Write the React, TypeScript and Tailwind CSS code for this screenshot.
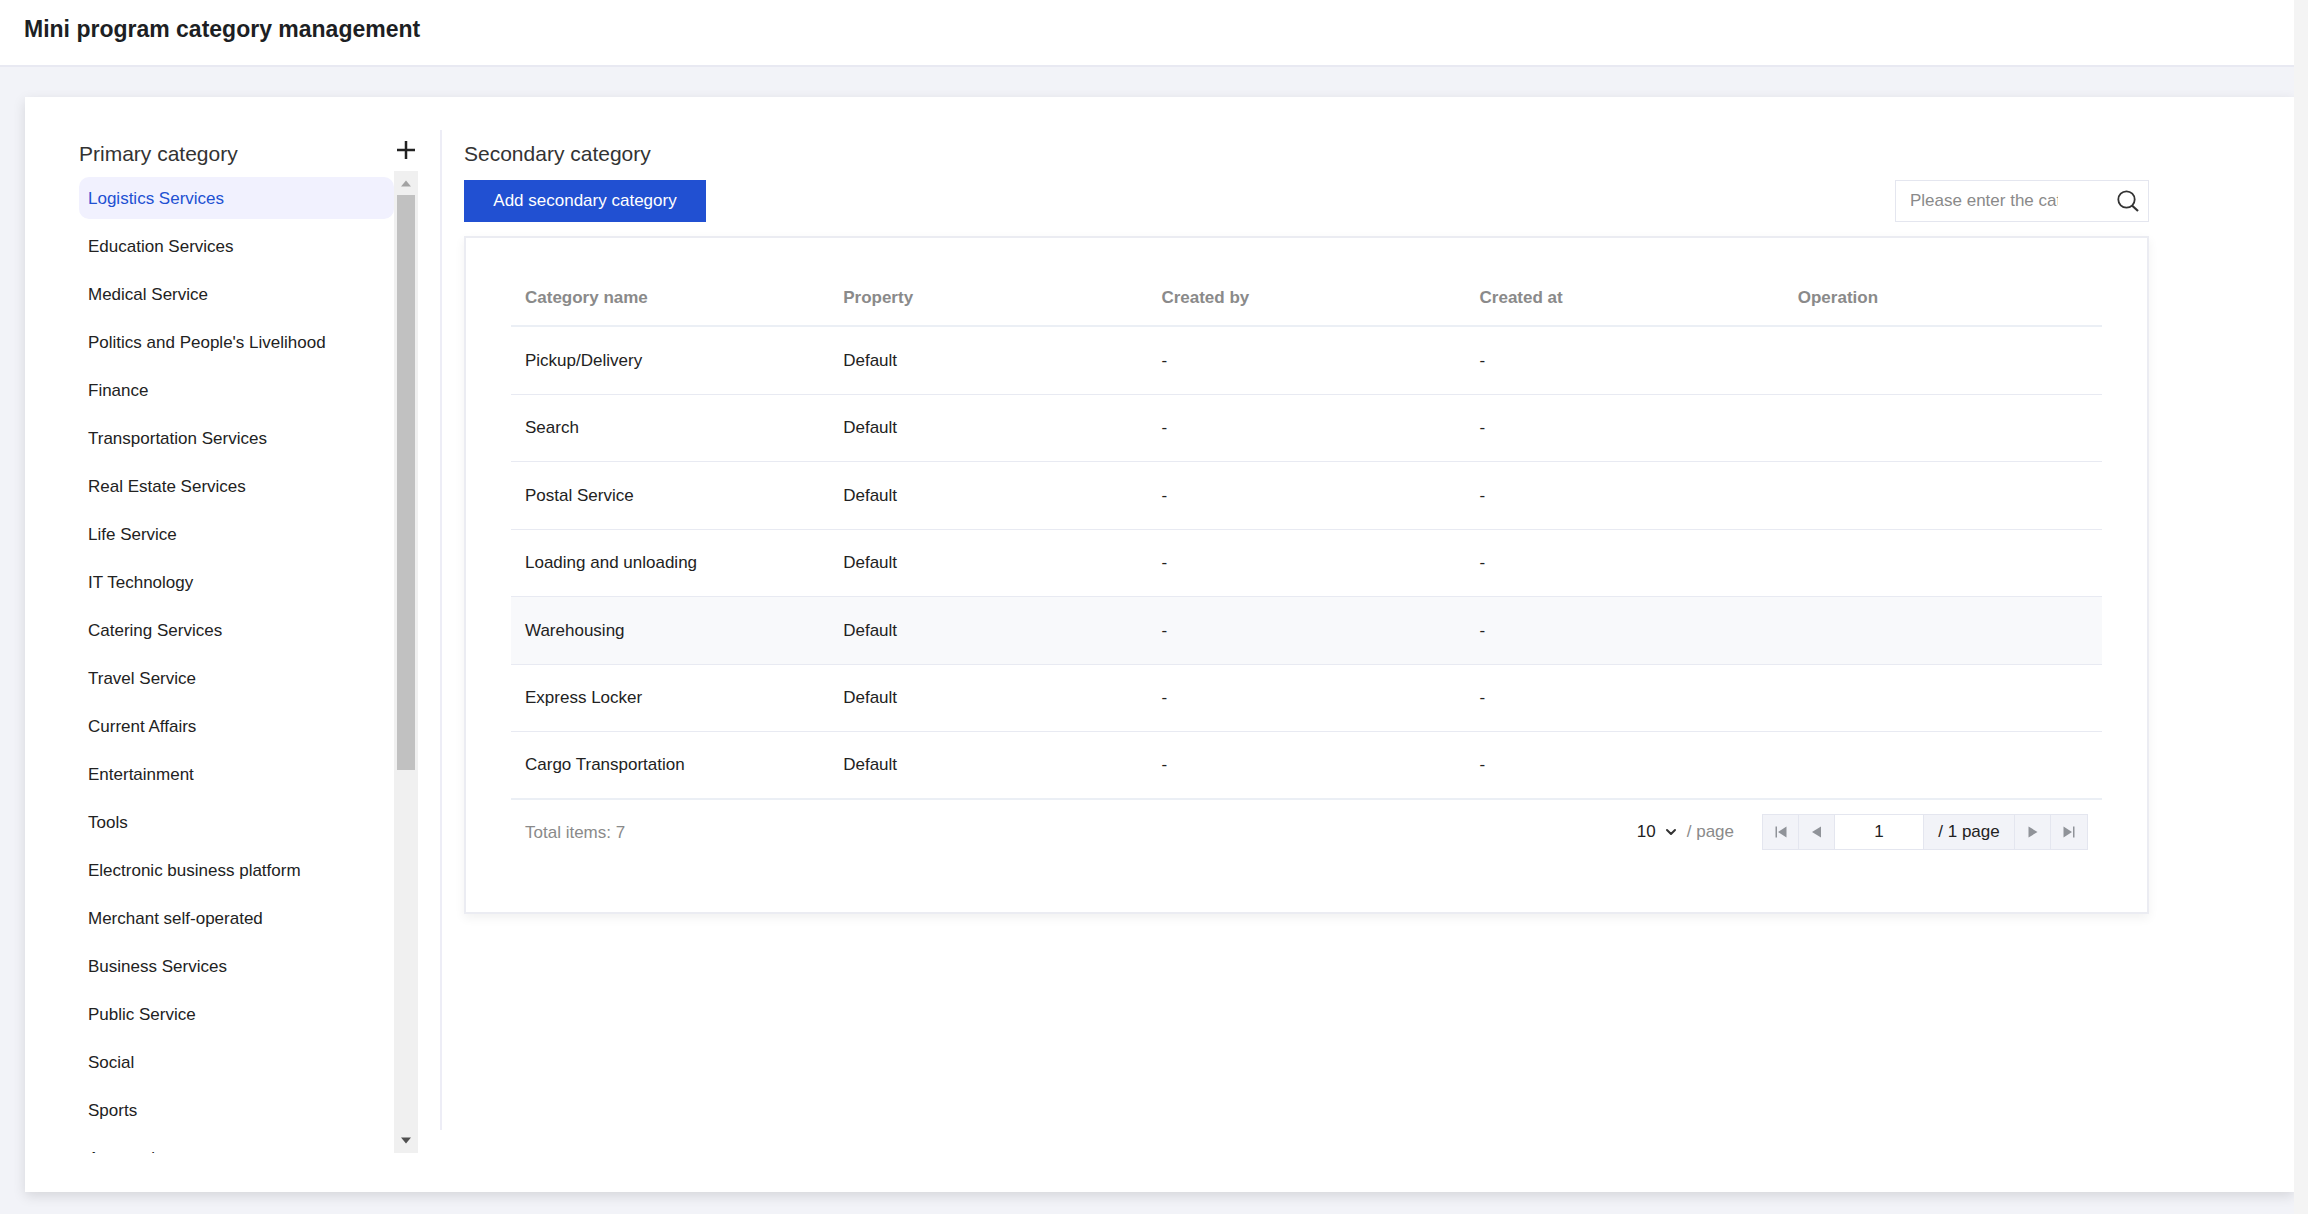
import { ChevronDown } from "lucide-react";

const categories = [
  "Logistics Services",
  "Education Services",
  "Medical Service",
  "Politics and People's Livelihood",
  "Finance",
  "Transportation Services",
  "Real Estate Services",
  "Life Service",
  "IT Technology",
  "Catering Services",
  "Travel Service",
  "Current Affairs",
  "Entertainment",
  "Tools",
  "Electronic business platform",
  "Merchant self-operated",
  "Business Services",
  "Public Service",
  "Social",
  "Sports",
  "Automotive",
];

const columns = ["Category name", "Property", "Created by", "Created at", "Operation"];

const rows = [
  "Pickup/Delivery",
  "Search",
  "Postal Service",
  "Loading and unloading",
  "Warehousing",
  "Express Locker",
  "Cargo Transportation",
];

function Header() {
  return (
    <header className="flex h-[67px] shrink-0 items-center border-b-2 border-[#e8e9f2] bg-white px-6 pb-2">
      <h1 className="text-[23px] leading-7 font-bold text-[#1d1f24]">
        Mini program category management
      </h1>
    </header>
  );
}

function ScrollBar() {
  return (
    <div className="flex w-6 shrink-0 flex-col items-center bg-[#f0f0f0]">
      <svg className="h-6 w-6 shrink-0" viewBox="0 0 24 24" fill="#a3a3a3">
        <path d="M7 15.5h10L12 9.5z" />
      </svg>
      <div className="flex w-full flex-1 flex-col px-[3px]">
        <div className="h-8/13 bg-[#c1c1c1]" />
      </div>
      <svg className="h-6 w-6 shrink-0" viewBox="0 0 24 24" fill="#505050">
        <path d="M7 8.5h10L12 14.5z" />
      </svg>
    </div>
  );
}

function PrimaryPanel() {
  return (
    <aside className="flex w-[339px] shrink-0 flex-col">
      <div className="flex h-[41px] items-start justify-between pt-2.5 pr-[3px]">
        <h2 className="text-[21px] leading-7 text-[#333]">Primary category</h2>
        <button type="button" aria-label="Add primary category" className="pt-px">
          <svg className="h-[18px] w-[18px]" viewBox="0 0 18 18" fill="none" stroke="#222" strokeWidth="2.5">
            <path d="M9 0v18M0 9h18" />
          </svg>
        </button>
      </div>
      <div className="flex min-h-0 flex-1">
        <ul className="flex min-w-0 flex-1 flex-col gap-1.5 overflow-hidden pt-1.5">
          {categories.map((name, i) => (
            <li key={name} className="shrink-0">
              <button
                type="button"
                className={
                  i === 0
                    ? "block h-[42px] w-full rounded-[10px] bg-[#f1f1fe] px-[9px] pt-px text-left text-[#2150d2]"
                    : "block h-[42px] w-full rounded-[10px] px-[9px] pt-px text-left"
                }
              >
                {name}
              </button>
            </li>
          ))}
        </ul>
        <ScrollBar />
      </div>
    </aside>
  );
}

function Toolbar() {
  return (
    <div className="flex items-center justify-between">
      <button type="button" className="h-[42px] w-[242px] bg-[#2150d2] text-white">
        Add secondary category
      </button>
      <label className="flex h-[42px] w-[254px] items-center justify-between border border-[#e4e6ef] bg-white pr-[9px] pl-3.5">
        <input
          type="text"
          aria-label="Search category"
          placeholder="Please enter the category name"
          className="w-[148px] outline-none placeholder:text-[#8a8a8a]"
        />
        <svg className="h-[22px] w-[22px]" viewBox="0 0 22 22" fill="none" stroke="#333" strokeWidth="1.8">
          <circle cx="9.5" cy="9.5" r="8.2" />
          <path d="M15 15.5l6 5.5" strokeWidth="2.2" />
        </svg>
      </label>
    </div>
  );
}

function CategoryTable() {
  return (
    <table className="w-full table-fixed border-collapse">
      <thead>
        <tr className="h-14 border-b-2 border-[#ebeff5]">
          {columns.map((name) => (
            <th key={name} className="px-3.5 pt-px text-left font-bold text-[#8a8a8a]">
              {name}
            </th>
          ))}
        </tr>
      </thead>
      <tbody>
        {rows.map((name) => (
          <tr
            key={name}
            className={
              name === "Warehousing"
                ? "h-[68px] border-b border-[#e8eaf2] bg-[#f8f9fb]"
                : "h-[68px] border-b border-[#e8eaf2] even:h-[67px] last:border-b-2 last:border-[#ebeff5]"
            }
          >
            <td className="px-3.5 pt-px">{name}</td>
            <td className="px-3.5 pt-px">Default</td>
            <td className="px-3.5 pt-px">-</td>
            <td className="px-3.5 pt-px">-</td>
            <td className="px-3.5 pt-px" />
          </tr>
        ))}
      </tbody>
    </table>
  );
}

function Pagination() {
  return (
    <div className="flex items-center justify-between px-3.5 pt-3.5">
      <span className="pt-0.5 text-[#8a8a8a]">Total items: 7</span>
      <div className="flex items-center">
        <label className="flex items-center text-[#8a8a8a]">
          <select aria-label="Items per page" className="w-5 appearance-none text-[#222]">
            <option>10</option>
          </select>
          <ChevronDown className="ml-1.5 h-4 w-4 text-[#333]" strokeWidth={3} />
          <span className="pl-2">/ page</span>
        </label>
        <div className="ml-7 flex h-9 divide-x divide-[#e4e6ef] border border-[#e4e6ef] bg-[#f2f3f8]">
          <button type="button" aria-label="First page" className="flex w-9 items-center justify-center">
            <svg className="h-3 w-3" viewBox="0 0 12 12" fill="#909399">
              <path d="M0.5 0.5h1.5v11h-1.5zM11.5 0.5v11L3 6z" />
            </svg>
          </button>
          <button type="button" aria-label="Previous page" className="flex w-9 items-center justify-center">
            <svg className="h-3 w-3" viewBox="0 0 12 12" fill="#909399">
              <path d="M10 0.5v11L1 6z" />
            </svg>
          </button>
          <input
            type="text"
            aria-label="Page number"
            defaultValue="1"
            className="w-[89px] bg-white text-center outline-none"
          />
          <span className="flex w-[91px] items-center justify-center">/ 1 page</span>
          <button type="button" aria-label="Next page" className="flex w-9 items-center justify-center">
            <svg className="h-3 w-3" viewBox="0 0 12 12" fill="#909399">
              <path d="M1.5 0.5v11l9-5.5z" />
            </svg>
          </button>
          <button type="button" aria-label="Last page" className="flex w-9 items-center justify-center">
            <svg className="h-3 w-3" viewBox="0 0 12 12" fill="#909399">
              <path d="M10 0.5h1.5v11h-1.5zM0.5 0.5v11L9 6z" />
            </svg>
          </button>
        </div>
      </div>
    </div>
  );
}

function SecondaryPanel() {
  return (
    <section className="min-w-0 flex-1 pt-2.5 pr-[145px] pl-[22px]">
      <h2 className="pb-3 text-[21px] leading-7 text-[#333]">Secondary category</h2>
      <Toolbar />
      <div className="mt-3.5 border-2 border-[#ebecf2] bg-white px-[45px] pt-8 pb-[62px] shadow-[0_4px_10px_rgba(0,0,0,0.06)]">
        <CategoryTable />
        <Pagination />
      </div>
    </section>
  );
}

export default function App() {
  return (
    <div className="flex h-screen bg-[#f4f4f4] font-['Liberation_Sans',Arial,sans-serif] text-[17px] leading-6 text-[#222]">
      <div className="flex min-w-0 flex-1 flex-col overflow-hidden bg-[#f2f3f8]">
        <Header />
        <main className="min-h-0 flex-1 pt-[30px] pb-[22px] pl-[25px]">
          <div className="flex h-full bg-white pt-[33px] pl-[54px] shadow-[0_4px_12px_rgba(0,0,0,0.12)]">
            <div className="flex pb-[39px]">
              <PrimaryPanel />
            </div>
            <div className="mb-[62px] ml-[22px] w-0.5 shrink-0 bg-[#ededf6]" />
            <SecondaryPanel />
          </div>
        </main>
      </div>
      <div className="w-3.5 shrink-0" />
    </div>
  );
}
